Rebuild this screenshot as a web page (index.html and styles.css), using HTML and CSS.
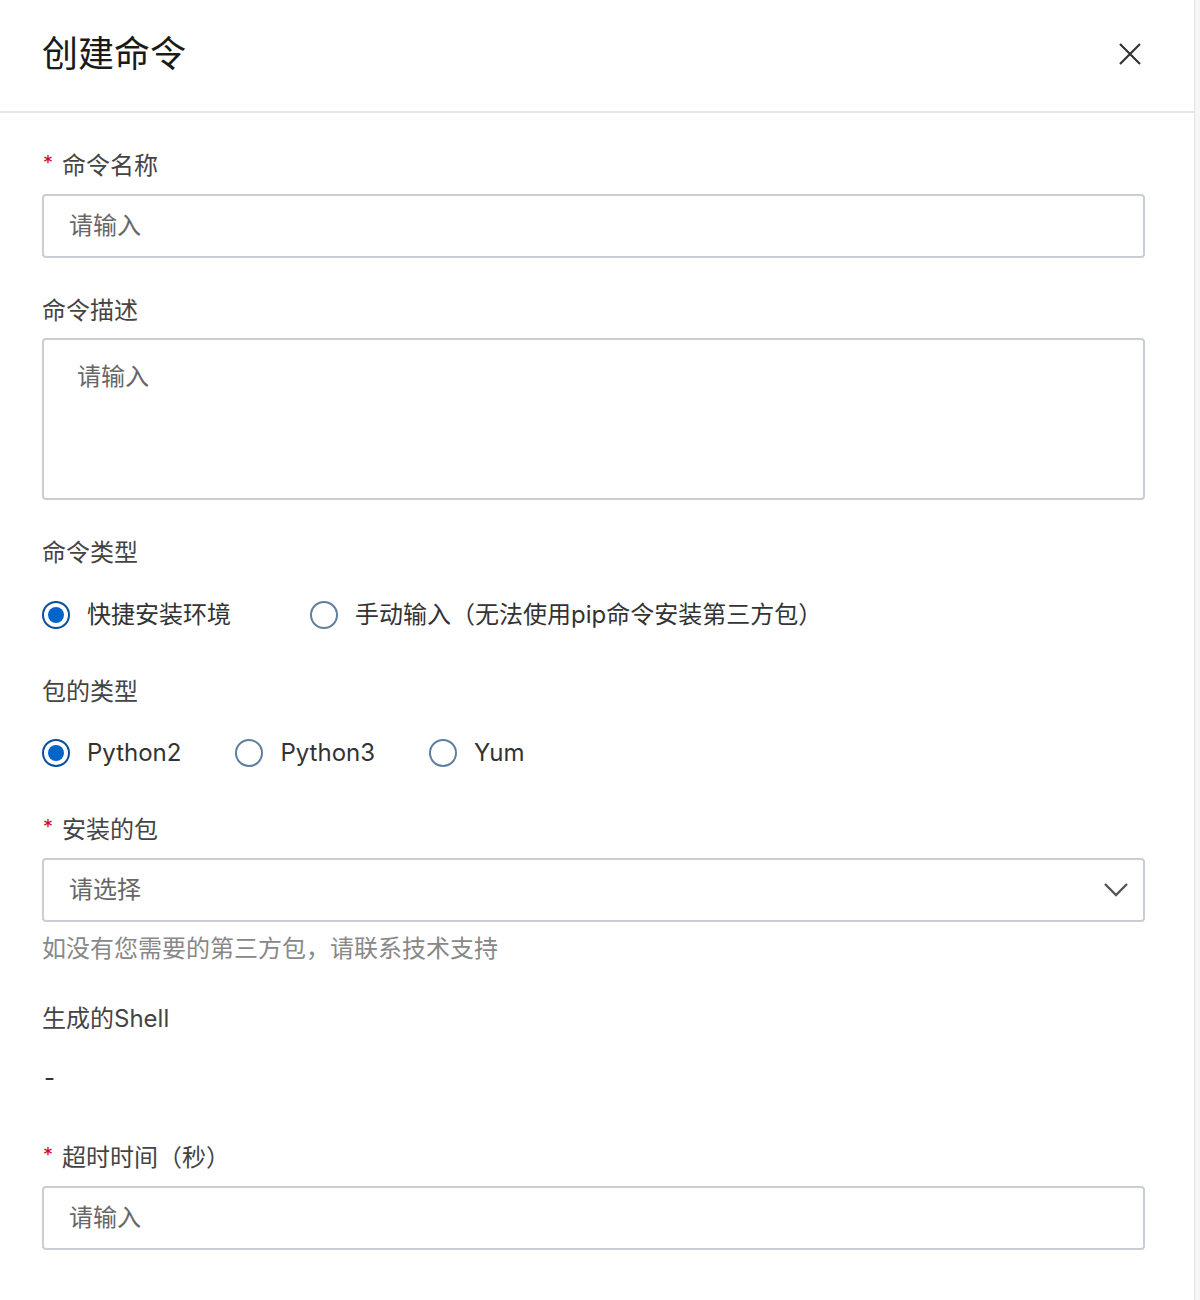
FILE: index.html
```html
<!DOCTYPE html>
<html lang="zh-CN">
<head>
<meta charset="utf-8">
<title>创建命令</title>
<link rel="stylesheet" href="styles.css">
</head>
<body>
<div class="panel">
  <header class="header">
    <h1 class="title">创建命令</h1>
    <button class="close" aria-label="关闭">
      <svg width="22" height="22" viewBox="0 0 22 22"><path d="M1 1 L21 21 M21 1 L1 21" stroke="#333" stroke-width="2.2" fill="none"/></svg>
    </button>
  </header>
  <div class="body">
    <div class="label"><span class="req">*</span>命令名称</div>
    <div class="input">请输入</div>

    <div class="label gap">命令描述</div>
    <div class="textarea">请输入</div>

    <div class="label gap2">命令类型</div>
    <div class="radios r1">
      <span class="radio wide"><span class="dot on"></span>快捷安装环境</span>
      <span class="radio"><span class="dot"></span>手动输入（无法使用pip命令安装第三方包）</span>
    </div>

    <div class="label after-radio">包的类型</div>
    <div class="radios r2">
      <span class="radio"><span class="dot on"></span>Python2</span>
      <span class="radio"><span class="dot"></span>Python3</span>
      <span class="radio"><span class="dot"></span>Yum</span>
    </div>

    <div class="label after-radio2"><span class="req">*</span>安装的包</div>
    <div class="input select">请选择
      <svg class="chev" width="26" height="16" viewBox="0 0 26 16"><path d="M2 2 L13 13 L24 2" stroke="#555" stroke-width="2.4" fill="none"/></svg>
    </div>
    <div class="help">如没有您需要的第三方包，请联系技术支持</div>

    <div class="label after-help">生成的Shell</div>
    <div class="dash">-</div>

    <div class="label after-dash"><span class="req">*</span>超时时间（秒）</div>
    <div class="input">请输入</div>
  </div>
</div>
</body>
</html>
```

FILE: styles.css
```css
html, body {
  margin: 0;
  padding: 0;
}
body {
  background: #f5f5f5;
  font-family: Inter, "Noto Sans CJK SC", sans-serif;
  color: #333;
}
.panel {
  width: 1194px;
  min-height: 1300px;
  background: #fff;
  box-shadow: 1px 0 0 #e4e4e4;
}
.header {
  height: 111px;
  border-bottom: 2px solid #e6e6e6;
  display: flex;
  align-items: center;
  justify-content: space-between;
  padding: 0 53px 0 42px;
}
.title {
  margin: 0;
  font-size: 36px;
  font-weight: 400;
  color: #1a1a1a;
  line-height: 1;
  position: relative;
  top: -2px;
}
.close {
  border: none;
  background: none;
  padding: 0;
  width: 22px;
  height: 22px;
  cursor: pointer;
  position: relative;
  top: -2px;
}
.body {
  padding: 37px 49px 40px 42px;
}
.label {
  font-size: 24px;
  line-height: 32px;
  color: #444;
  margin-bottom: 12px;
}
.label.gap { margin-top: 37px; margin-bottom: 11px; }
.label.gap2 { margin-top: 37px; margin-bottom: 0; }
.label.after-radio { margin-top: 45px; margin-bottom: 0; }
.label.after-radio2 { margin-top: 45px; }
.label.after-help { margin-top: 38px; margin-bottom: 0; }
.label.after-dash { margin-top: 48px; }
.req {
  display: inline-block;
  width: 20px;
  color: #d9001b;
  font-size: 20px;
  vertical-align: top;
  line-height: 26px;
  padding-left: 1px;
  box-sizing: border-box;
}
.input, .textarea {
  box-sizing: border-box;
  border: 2px solid #c9cdd4;
  border-radius: 4px;
  font-size: 24px;
  color: #666;
}
.input {
  height: 64px;
  line-height: 60px;
  padding: 0 25px;
  position: relative;
}
.textarea {
  height: 162px;
  padding: 21px 33px;
  line-height: 32px;
}
.select .chev {
  position: absolute;
  right: 14px;
  top: 22px;
}
.radios {
  display: flex;
  align-items: center;
  height: 32px;
  font-size: 24px;
  line-height: 32px;
  color: #333;
}
.radios.r1 { margin-top: 30px; }
.radios.r2 { margin-top: 29px; }
.radio {
  display: inline-flex;
  align-items: center;
  height: 32px;
  line-height: 32px;
  margin-right: 54px;
  white-space: nowrap;
}
.radio.wide { margin-right: 79px; }
.dot {
  width: 28px;
  height: 28px;
  box-sizing: border-box;
  border: 2px solid #5f7fa0;
  border-radius: 50%;
  margin-right: 17px;
  position: relative;
  flex: none;
}
.dot.on {
  border-color: #0a4f9e;
}
.dot.on::after {
  content: "";
  position: absolute;
  left: 4px;
  top: 4px;
  width: 16px;
  height: 16px;
  border-radius: 50%;
  background: #0064c8;
}
.help {
  margin-top: 11px;
  font-size: 24px;
  line-height: 32px;
  color: #888;
}
.dash {
  margin-top: 27px;
  font-size: 24px;
  line-height: 32px;
  color: #333;
  padding-left: 2px;
}
```
